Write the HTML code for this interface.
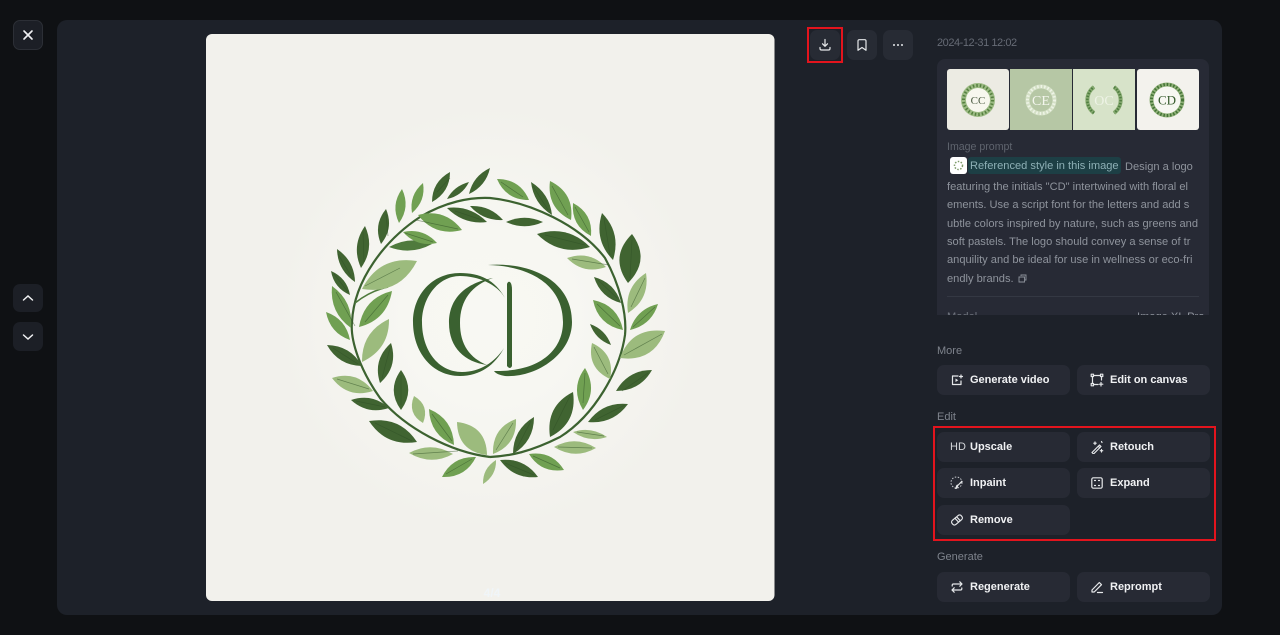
<!DOCTYPE html>
<html><head><meta charset="utf-8"><title>Image detail</title>
<style>
*{box-sizing:border-box}
html,body{margin:0;padding:0;width:1280px;height:635px;overflow:hidden;background:#0f1114;font-family:"Liberation Sans",sans-serif}
.a{position:absolute}
#panel{left:57px;top:20px;width:1165px;height:595px;background:#1d2129;border-radius:10px}
.ib{position:absolute;background:#272b34;border-radius:7px;display:flex;align-items:center;justify-content:center}
.btn{position:absolute;width:133px;height:30px;background:#272a34;border-radius:7px;color:#f0f1f3;font-weight:700;font-size:11px;line-height:31px;padding-left:33px}
.btn svg{position:absolute;left:13px;top:8px}
.lab{position:absolute;left:937px;font-size:11px;color:#7e838c;line-height:14px}
.ln{position:absolute;left:10px;font-size:11.1px;line-height:16px;color:#8e939c;white-space:nowrap}
svg{display:block}
.st{fill:none;stroke:#e6e8ea;stroke-width:1.2;stroke-linecap:round;stroke-linejoin:round}
</style></head><body>
<div class="a" id="panel"></div>

<div class="ib" style="left:13px;top:20px;width:30px;height:30px;background:#1c1f26;border:1px solid #2c2f36"><svg width="14" height="14" viewBox="0 0 14 14"><path d="M3 3L11 11M11 3L3 11" fill="none" stroke="#f0f1f3" stroke-width="1.6" stroke-linecap="round"/></svg></div>
<div class="ib" style="left:13px;top:284px;width:30px;height:28px;background:#1c1f26"><svg width="14" height="14" viewBox="0 0 14 14"><path d="M2.500 9L7 5L11.500 9" fill="none" stroke="#f0f1f3" stroke-width="1.5" stroke-linecap="round"/></svg></div>
<div class="ib" style="left:13px;top:322px;width:30px;height:29px;background:#1c1f26"><svg width="14" height="14" viewBox="0 0 14 14"><path d="M2.500 5L7 9L11.500 5" fill="none" stroke="#f0f1f3" stroke-width="1.5" stroke-linecap="round"/></svg></div>

<svg class="a" style="left:206px;top:34px" width="569" height="567" viewBox="206 34 569 567">
<defs><radialGradient id="g" cx="50%" cy="50%" r="50%"><stop offset="0" stop-color="#f8f8f3"/><stop offset=".3" stop-color="#f7f7f2"/><stop offset=".75" stop-color="#f2f1ec"/></radialGradient></defs>
<rect x="206" y="34" width="568.500" height="567" rx="6" fill="url(#g)"/>
<path d="M490 457C450 452 405 428 380 398C360 370 350 340 352 322C354 280 385 240 420 217C445 202 470 197 490 198C530 202 580 225 605 258C620 285 627 315 625 335C620 370 595 415 560 437C530 452 510 456 490 457" fill="none" stroke="#3c6230" stroke-width="2.200"/>
<path d="M355 303Q370 291 388 287" fill="none" stroke="#4f7a3d" stroke-width="1.600"/>
<g fill="#406431">
<path d="M432 202Q450 192 450 172Q432 182 432 202"/>
<path d="M447 199Q462 196 469 182Q454 186 447 199"/>
<path d="M469 194Q486 186 490 168Q473 176 469 194"/>
<path d="M381 244Q394 228 386 209Q373 225 381 244"/>
<path d="M361 268Q375 248 365 226Q351 246 361 268"/>
<path d="M355 282Q354.500 261 337 249Q337.500 270 355 282"/>
<path d="M350 295Q347 278 331 271Q334 288 350 295"/>
<path d="M447 208Q464 225 487 222Q470 205 447 208"/>
<path d="M470 206Q483 221 503 220Q490 205 470 206"/>
<path d="M552 215Q549.500 193.500 531 182Q533.500 203.500 552 215"/>
<path d="M613 260Q621.500 233 602 213Q593.500 240 613 260"/>
<path d="M628 283Q651 260 632 234Q609 257 628 283"/>
<path d="M621 303Q614.500 282.500 594 277Q600.500 297.500 621 303"/>
<path d="M590 247Q567.500 224.500 537 234Q559.500 256.500 590 247"/>
<path d="M543 222Q524.500 213.500 506 222Q524.500 230.500 543 222"/>
<path d="M590 324Q595.500 339.500 611 345Q605.500 329.500 590 324"/>
<path d="M616 391Q640 391 652 370Q628 370 616 391"/>
<path d="M550 437Q577.500 423 573 392Q545.500 406 550 437"/>
<path d="M588 422Q613 424.500 628 404Q603 401.500 588 422"/>
<path d="M513 454Q534 441.500 534 417Q513 429.500 513 454"/>
<path d="M500 460Q514 479.500 538 477Q524 457.500 500 460"/>
<path d="M362 366Q350.500 345.500 327 345Q338.500 365.500 362 366"/>
<path d="M389 408Q372.500 393 351 400Q367.500 415 389 408"/>
<path d="M417 442Q400 416 369 421Q386 447 417 442"/>
<path d="M380 383Q398.500 366.500 391 343Q372.500 359.500 380 383"/>
<path d="M401 410Q415.500 390 401 370Q386.500 390 401 410"/>
</g>
<path d="M389 247Q411 255.500 432 244Q410 235.500 389 247" fill="#4f7a3d"/>
<g fill="#70a052">
<path d="M412 213Q426 201 423 183Q409 195 412 213"/>
<path d="M399 223Q410.500 207 402 189Q390.500 205 399 223"/>
<path d="M351 328Q353.500 301.500 332 286Q329.500 312.500 351 328"/>
<path d="M350 340Q346 319 326 312Q330 333 350 340"/>
<path d="M359 327Q387 320 392 291Q364 298 359 327"/>
<path d="M403 232Q417 247.500 437 243Q423 227.500 403 232"/>
<path d="M418 215Q435 237 462 230Q445 208 418 215"/>
<path d="M529 200Q520 179 497 179Q506 200 529 200"/>
<path d="M571 220Q574.500 193 550 181Q546.500 208 571 220"/>
<path d="M591 236Q593 213.500 573 203Q571 225.500 591 236"/>
<path d="M630 330Q651.500 325 658 304Q636.500 309 630 330"/>
<path d="M623 330Q618 305 593 300Q598 325 623 330"/>
<path d="M583 410Q598 390 585 368Q570 388 583 410"/>
<path d="M529 454Q541 473.500 564 470Q552 450.500 529 454"/>
<path d="M454 445Q453 419 429 409Q430 435 454 445"/>
<path d="M476 457Q452.500 456 442 477Q465.500 478 476 457"/>
</g>
<g fill="#9cbb7d">
<path d="M362 289Q399.500 295 417 261Q379.500 255 362 289"/>
<path d="M628 313Q650 299 646 273Q624 287 628 313"/>
<path d="M606 267Q589.500 250 567 258Q583.500 275 606 267"/>
<path d="M620 358Q653.500 362.500 665 331Q631.500 326.500 620 358"/>
<path d="M610 379Q615.400 354 592 343Q586.600 368 610 379"/>
<path d="M573 432Q589 443 607 437Q591 426 573 432"/>
<path d="M554 447Q575 460 596 448Q575 435 554 447"/>
<path d="M493 454Q517 445 516 419Q492 428 493 454"/>
<path d="M483 484Q496.500 475.500 496 460Q482.500 468.500 483 484"/>
<path d="M373 391Q357 370 332 378Q348 399 373 391"/>
<path d="M423 423Q430 405.500 414 396Q407 413.500 423 423"/>
<path d="M487 455Q486.400 425.500 457 422Q457.600 451.500 487 455"/>
<path d="M453 454Q431 466 409 453Q431 441 453 454"/>
<path d="M362 362Q389.500 349 389 319Q361.500 332 362 362"/>
</g>
<path d="M437 192L450 178M388 236L386 214M364 262L363 232M351 276L338 254M348 292L334 274M455 211L482 220M548 210L533 186M610 255L604 218M630 278L632 240M617 298L598 280M585 245L545 235M622 391L648 373M553 430L570 396M595 420L625 405M516 450L531 421M505 463L534 475M358 364L333 348M385 407L356 401M412 441L375 423M382 378L390 348M401 405L401 375M416 220L458 229M405 233L433 242M523 197L501 182M568 215L552 186M589 232L575 207M633 327L655 307M620 326L597 304M583 403L585 373M533 456L560 468M452 441L432 414M472 459L446 474M365 322L388 295M355 326L336 292M365 286L400 268M631 307L645 278M609 265L572 259M624 355L662 334M608 374L594 347M577 432L604 436M558 447L592 448M496 450L513 423M369 389L337 379M458 451L413 454" fill="none" stroke="#2f5026" stroke-width=".7" opacity=".55"/>
<g fill="#3a6130">
<path d="M505 298C495 280 480 273 460 273C432 273 413 295 413 322C413 352 432 376 460 376C480 376 495 365 504 348C495 362 480 372 462 372C438 372 422 350 422 322C422 298 438 276 460 276C478 276 497 284 505 298Z"/>
<path d="M493 278C470 282 449 295 449 323C449 348 465 362 487 365C470 358 460 345 460 323C460 300 472 285 493 278Z"/>
<path d="M488 265C530 262 572 280 572 322C572 355 535 378 505 376C500 375 496 374 494 371C540 372 563 350 563 322C563 285 530 266 488 265Z"/>
<path d="M507 284Q508 281 510 282Q512 284 512 290V366Q510 370 507 366Z"/>
</g>
<text x="492" y="597" font-family="Liberation Sans" font-size="12" font-weight="700" fill="#f0f5f8" text-anchor="middle">4/4</text>
</svg>

<div class="a" style="left:807px;top:27px;width:36px;height:36px;border:2px solid #e3141d"></div>
<div class="ib" style="left:810px;top:30px;width:30px;height:30px"><svg width="14" height="14" viewBox="0 0 14 14"><path class="st" d="M7 1.500V8M4.500 5.800L7 8.300L9.500 5.800M2 9.500V10.500Q2 12 3.500 12H10.500Q12 12 12 10.500V9.500"/></svg></div>
<div class="ib" style="left:847px;top:30px;width:30px;height:30px"><svg width="14" height="14" viewBox="0 0 14 14"><path class="st" d="M3 3Q3 1.700 4.300 1.700H9.700Q11 1.700 11 3V12.300L7 9.500L3 12.300Z"/></svg></div>
<div class="ib" style="left:883px;top:30px;width:30px;height:30px"><svg width="14" height="14" viewBox="0 0 14 14"><circle cx="3" cy="7" r="1" fill="#e6e8ea"/><circle cx="7" cy="7" r="1" fill="#e6e8ea"/><circle cx="11" cy="7" r="1" fill="#e6e8ea"/></svg></div>

<div class="a" style="left:937px;top:36px;font-size:11px;letter-spacing:-.45px;line-height:14px;color:#666b75">2024-12-31 12:02</div>

<div class="a" style="left:937px;top:59px;width:272px;height:256px;background:#272a35;border-radius:8px 8px 0 0;overflow:hidden">
 <svg class="a" style="left:10px;top:10px" width="252" height="61" viewBox="0 0 252 61" font-family="Liberation Serif">
  <rect x="0" y="0" width="62" height="61" rx="3" fill="#ecebe3"/>
  <rect x="63" y="0" width="62" height="61" fill="#b6c7a5"/>
  <rect x="126" y="0" width="62" height="61" fill="#d7e3c9"/>
  <rect x="190" y="0" width="62" height="61" rx="3" fill="#f3f2ed"/>
  <circle cx="31" cy="31" r="14.500" fill="#f7f7ee" stroke="#9dbb85" stroke-width="5"/>
  <circle cx="31" cy="31" r="14.500" fill="none" stroke="#55803f" stroke-width="3" stroke-dasharray="1.500 2"/>
  <text x="31" y="35" font-size="11" fill="#4a5a40" text-anchor="middle">CC</text>
  <circle cx="94" cy="31" r="13.500" fill="none" stroke="#d4e0c6" stroke-width="4"/>
  <circle cx="94" cy="31" r="13.500" fill="none" stroke="#eef4e6" stroke-width="3" stroke-dasharray="1.500 2"/>
  <text x="94" y="36" font-size="14" fill="#f4f6ee" text-anchor="middle">CE</text>
  <path d="M147 44A16 16 0 0 1 147 18M167 18A16 16 0 0 1 167 44" fill="none" stroke="#86aa70" stroke-width="4"/>
  <path d="M147 44A16 16 0 0 1 147 18M167 18A16 16 0 0 1 167 44" fill="none" stroke="#4f7d40" stroke-width="2.500" stroke-dasharray="1.500 1.500"/>
  <text x="157" y="36" font-size="14" fill="#eef3e6" text-anchor="middle">OC</text>
  <circle cx="220" cy="31" r="15.500" fill="#f7f7f2" stroke="#8fb078" stroke-width="4"/>
  <circle cx="220" cy="31" r="15.500" fill="none" stroke="#447436" stroke-width="3" stroke-dasharray="1.500 1.800"/>
  <text x="220" y="35.500" font-size="13" fill="#355a2b" text-anchor="middle">CD</text>
 </svg>
 <div class="ln" style="top:80px;color:#5f646e;font-size:10.6px">Image prompt</div>
 <svg class="a" style="left:13px;top:98px" width="17" height="17" viewBox="0 0 17 17"><rect width="17" height="17" rx="3" fill="#fff"/><circle cx="8.500" cy="8.500" r="4" fill="none" stroke="#7d9a68" stroke-width="1.500" stroke-dasharray="1.500 1.500"/></svg>
 <div class="a" style="left:31px;top:98px;width:153px;height:17px;background:#1d3f45;border-radius:3px"></div>
 <div class="ln" style="left:33px;top:99px;line-height:17px;color:#8eb0b6">Referenced style in this image</div>
 <div class="ln" style="left:188px;top:100px">Design a logo</div>
 <div class="ln" style="top:120px">featuring the initials "CD" intertwined with floral el</div>
 <div class="ln" style="top:138px">ements. Use a script font for the letters and add s</div>
 <div class="ln" style="top:157px">ubtle colors inspired by nature, such as greens and</div>
 <div class="ln" style="top:175px">soft pastels. The logo should convey a sense of tr</div>
 <div class="ln" style="top:193px">anquility and be ideal for use in wellness or eco-fri</div>
 <div class="ln" style="top:212px">endly brands.</div>
 <svg class="a" style="left:81px;top:215px" width="9" height="9" viewBox="0 0 9 9"><path d="M3 2V1H8V6H7M1 3H6.500V8H1Z" fill="none" stroke="#8e939c" stroke-width=".9"/></svg>
 <div class="a" style="left:10px;top:237px;width:252px;height:1px;background:#343843"></div>
 <div class="ln" style="top:250px;color:#6f747e">Model</div>
 <div class="ln" style="left:200px;top:250px;color:#8e939c">Image XL Pro</div>
</div>

<div class="lab" style="top:344px">More</div>
<div class="btn" style="left:937px;top:365px">Generate video<svg width="14" height="14" viewBox="0 0 14 14"><path class="st" d="M8 3H2.500V11.500H11V8"/><path d="M5.500 5.500V9L8.300 7.200Z" fill="#e6e8ea"/><path d="M11 2V5M9.500 3.500H12.500" class="st"/></svg></div>
<div class="btn" style="left:1077px;top:365px">Edit on canvas<svg width="14" height="14" viewBox="0 0 14 14"><path class="st" d="M3.500 2.500H10.500M2.500 3.500V10.500M11.500 3.500V7M3.500 11.500H8"/><rect x="1.200" y="1.200" width="2.300" height="2.300" class="st"/><rect x="10.500" y="1.200" width="2.300" height="2.300" class="st"/><rect x="1.200" y="10.500" width="2.300" height="2.300" class="st"/><path class="st" d="M11 9.500V13M9.300 11.200H12.800"/></svg></div>

<div class="lab" style="top:410px">Edit</div>
<div class="btn" style="left:937px;top:432px"><span class="a" style="left:13px;font-weight:400;color:#d4d6da;font-size:11px">HD</span>Upscale</div>
<div class="btn" style="left:1077px;top:432px">Retouch<svg width="14" height="14" viewBox="0 0 14 14"><path class="st" d="M2 12.500L9.500 5L11 6.500L3.500 14Z M8.300 6.200L9.800 7.700"/><path class="st" d="M5 2V4.500M3.800 3.200H6.200M11.500 9.500V12M10.300 10.700H12.700M11.500 1.500L12 2.500"/></svg></div>
<div class="btn" style="left:937px;top:468px">Inpaint<svg width="14" height="14" viewBox="0 0 14 14"><circle cx="6.500" cy="6.500" r="5.500" fill="none" stroke="#c8cbd0" stroke-width="1" stroke-dasharray="1.500 1.500"/><path d="M12.800 5.500L8.500 9.500L7 12.800L4.500 13Q6 11.500 6 10Q6.500 8.500 8 8.500L11.800 4.500Z" fill="#e6e8ea"/></svg></div>
<div class="btn" style="left:1077px;top:468px">Expand<svg width="14" height="14" viewBox="0 0 14 14"><rect x="1.800" y="1.800" width="10.400" height="10.400" rx="1.500" class="st"/><path d="M4.500 4.500H5.500M8.500 4.500H9.500M4.500 9.500H5.500M8.500 9.500H9.500" class="st"/></svg></div>
<div class="btn" style="left:937px;top:505px">Remove<svg width="14" height="14" viewBox="0 0 14 14"><rect x="1" y="4.300" width="12" height="5.400" rx="2.300" transform="rotate(-40 7 7)" class="st"/><path class="st" d="M5 5.300L8.500 9M6.800 4L10.200 7.700"/></svg></div>

<div class="lab" style="top:550px">Generate</div>
<div class="btn" style="left:937px;top:572px">Regenerate<svg width="14" height="14" viewBox="0 0 14 14"><path class="st" d="M2.200 6V5.300Q2.200 4 3.500 4H12M9.800 1.800L12 4L9.800 6.200M11.800 8V8.700Q11.800 10 10.500 10H2M4.200 7.800L2 10L4.200 12.200"/></svg></div>
<div class="btn" style="left:1077px;top:572px">Reprompt<svg width="14" height="14" viewBox="0 0 14 14"><path class="st" d="M2 10L9.300 2.500L11.500 4.700L4.200 12H2ZM7.500 12.500H12.500"/></svg></div>

<div class="a" style="left:933px;top:426px;width:283px;height:115px;border:2px solid #e3141d"></div>
</body></html>
